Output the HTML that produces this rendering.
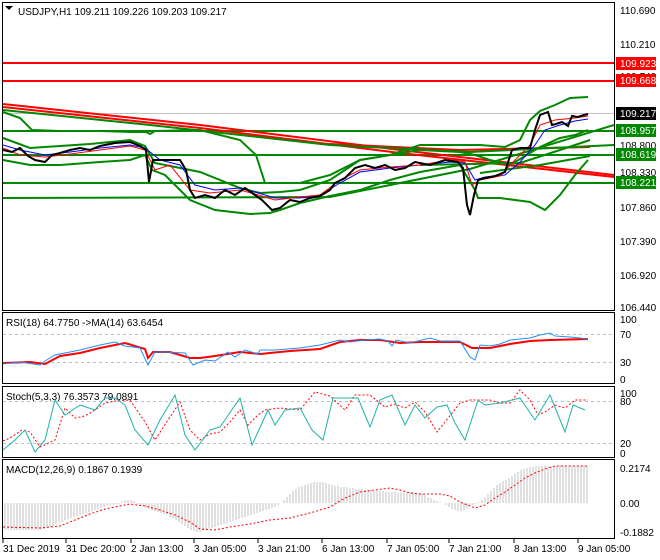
<!DOCTYPE html>
<html><head><meta charset="utf-8"><style>
body{margin:0;background:#fff;}
svg{display:block;font-family:"Liberation Sans",sans-serif;}
text{font-size:10px;fill:#000}
</style></head><body>
<svg width="660" height="560" viewBox="0 0 660 560" xmlns="http://www.w3.org/2000/svg">
<rect width="660" height="560" fill="#fff"/>
<!-- panels -->
<g fill="none" stroke="#000" stroke-width="1">
<rect x="2.5" y="2.5" width="612" height="308"/>
<rect x="2.5" y="312.5" width="612" height="71"/>
<rect x="2.5" y="386.5" width="612" height="71"/>
<rect x="2.5" y="459.5" width="612" height="79"/>
</g>
<!-- main chart -->
<polygon points="5,6 13,6 9,10" fill="#000"/>
<text x="18" y="15">USDJPY,H1  109.211 109.226 109.203 109.217</text>
<line x1="3" y1="113.5" x2="614" y2="113.5" stroke="#c0c0c0"/>
<line x1="3" y1="63" x2="614" y2="63" stroke="#f00" stroke-width="2"/>
<line x1="3" y1="81" x2="614" y2="81" stroke="#f00" stroke-width="2"/>
<line x1="3" y1="131" x2="614" y2="131" stroke="#080" stroke-width="2"/>
<line x1="3" y1="155" x2="614" y2="155" stroke="#080" stroke-width="2"/>
<line x1="3" y1="183" x2="614" y2="183" stroke="#080" stroke-width="2"/>
<polyline points="3,104 200,125 400,150 614,175" fill="none" stroke="#f00" stroke-width="2"/>
<polyline points="3,107 200,128 400,153 614,177" fill="none" stroke="#f00" stroke-width="2"/>
<polyline points="330,144 460,150 590,147" fill="none" stroke="#f00" stroke-width="2"/>
<polyline points="3,110 150,125 330,145 470,152 614,145" fill="none" stroke="#080" stroke-width="2"/>
<g fill="none" stroke="#080" stroke-width="2">
<polyline points="3,112 20,118 32,130 60,131 100,131 130,132 146,132 150,134 155,131 200,130 240,140 256,155 265,183 300,183 330,175 360,160 390,155 420,145 460,145 480,145 505,147 520,140 530,120 540,111 555,105 570,98 588,97"/>
<polyline points="3,138 30,148 60,146 90,144 110,142 130,140 145,146 155,163 200,172 240,188 260,193 280,192 300,190 330,180 360,160 390,155 420,150 460,152 475,155 490,160 510,165 540,147 560,138 575,135 588,130"/>
<polyline points="3,160 30,165 60,165 100,162 130,160 145,155 152,170 165,175 190,200 215,210 250,214 270,213 280,210 300,203 330,196 360,190 390,180 420,172 460,165 475,190 478,198 500,198 530,202 545,210 560,195 575,175 588,160"/>
<polyline points="3,198 330,197 470,169 614,125"/>
<polyline points="420,165 520,163 560,150 590,140"/>
<polyline points="480,173 540,165 590,156"/>
</g>
<polyline points="3,145 20,150 45,155 70,152 100,148 130,145 145,148 160,160 180,165 195,185 215,190 240,188 255,192 275,198 300,198 320,195 340,183 360,172 390,168 420,165 450,162 465,163 475,180 485,177 505,175 520,162 535,145 545,130 560,125 575,121 588,119" fill="none" stroke="#00f" stroke-width="1"/>
<polyline points="3,148 20,155 45,157 70,154 100,150 130,146 145,150 155,170 170,165 190,190 210,193 240,190 255,194 275,200 300,197 320,195 340,180 360,170 390,167 420,165 450,160 465,162 472,185 480,180 500,176 515,160 530,145 540,125 555,120 575,118 588,116" fill="none" stroke="#f00" stroke-width="1"/>
<polyline points="3,150 12,152 20,148 28,156 35,160 45,162 52,155 60,153 70,150 80,148 90,150 100,146 115,143 130,142 140,146 146,150 149,182 153,160 160,160 170,160 180,160 186,170 190,190 195,198 205,195 215,198 225,190 235,195 245,188 255,195 262,200 272,210 280,208 290,200 300,202 310,198 320,196 330,190 335,183 345,178 355,168 365,165 375,168 385,165 395,170 405,168 415,162 430,165 445,160 458,162 463,168 467,205 470,215 474,195 478,180 485,178 495,176 505,172 512,150 520,148 530,148 535,130 540,115 548,112 552,125 556,124 562,122 568,126 572,116 578,117 584,115 588,114" fill="none" stroke="#000" stroke-width="2"/>
<!-- price axis -->
<g>
<text x="620" y="14">110.690</text>
<text x="620" y="48">110.210</text>
<text x="620" y="149">108.800</text>
<text x="620" y="176">108.330</text>
<text x="620" y="211">107.860</text>
<text x="620" y="245">107.390</text>
<text x="620" y="279">106.920</text>
<text x="620" y="311">106.440</text>
<text x="620" y="80">109.740</text>
<rect x="616" y="57" width="40" height="13" fill="#f00"/><text x="620" y="67" style="fill:#fff">109.923</text>
<rect x="616" y="74" width="40" height="13" fill="#f00"/><text x="620" y="84" style="fill:#fff">109.668</text>
<rect x="616" y="107" width="40" height="13" fill="#000"/><text x="620" y="117" style="fill:#fff">109.217</text>
<rect x="616" y="124" width="40" height="13" fill="#080"/><text x="620" y="134" style="fill:#fff">108.957</text>
<rect x="616" y="148" width="40" height="13" fill="#080"/><text x="620" y="158" style="fill:#fff">108.619</text>
<rect x="616" y="176" width="40" height="13" fill="#080"/><text x="620" y="186" style="fill:#fff">108.221</text>
</g>
<!-- RSI -->
<text x="6" y="326">RSI(18) 64.7750  -&gt;MA(14) 63.6454</text>
<line x1="3" y1="334.5" x2="614" y2="334.5" stroke="#c0c0c0" stroke-dasharray="3,3"/>
<line x1="3" y1="362.5" x2="614" y2="362.5" stroke="#c0c0c0" stroke-dasharray="3,3"/>
<polyline points="3,363 30,362 45,364 60,356 80,353 100,348 125,343 145,349 148,358 153,352 170,352 190,358 200,358 215,356 240,352 260,354 290,351 320,349 340,342 360,340 380,340 400,343 420,342 460,342 472,348 490,348 510,344 530,341 550,340 588,339" fill="none" stroke="#f00" stroke-width="2"/>
<polyline points="3,364 20,362 40,365 45,361 55,355 65,353 80,350 100,345 115,342 125,346 140,348 148,365 155,352 165,352 185,353 193,365 205,360 215,361 228,352 235,357 245,350 258,354 260,350 275,350 300,348 320,345 340,340 350,342 365,340 380,339 388,341 392,346 396,340 410,343 430,338 440,341 460,341 470,357 475,360 480,345 490,346 500,344 510,340 520,339 530,338 540,335 550,333 555,336 570,337 580,338 588,339" fill="none" stroke="#1e90ff" stroke-width="1"/>
<text x="620" y="323">100</text><text x="620" y="338">70</text><text x="620" y="366">30</text><text x="620" y="383">0</text>
<!-- Stoch -->
<text x="6" y="400">Stoch(5,3,3) 76.3573 79.0891</text>
<line x1="3" y1="401.5" x2="614" y2="401.5" stroke="#c0c0c0" stroke-dasharray="3,3"/>
<line x1="3" y1="443.5" x2="614" y2="443.5" stroke="#c0c0c0" stroke-dasharray="3,3"/>
<polyline points="3,441 10,438 22,430 30,432 40,447 55,440 65,408 75,418 85,416 95,410 105,403 115,401 130,400 145,422 155,440 168,420 180,402 190,430 200,440 210,434 220,432 230,422 240,410 248,425 258,415 265,410 280,408 300,410 315,392 330,396 345,410 355,395 370,395 385,407 395,404 405,408 415,402 425,412 437,432 445,422 460,403 470,400 480,400 490,400 500,403 510,403 520,390 530,400 538,415 545,412 555,405 565,408 575,400 588,400" fill="none" stroke="#f00" stroke-width="1" stroke-dasharray="2,2"/>
<polyline points="3,450 15,440 25,430 35,452 45,440 55,400 65,415 80,405 95,410 105,398 115,398 125,405 135,430 148,445 160,420 175,395 185,435 195,450 210,430 220,427 225,420 235,405 240,398 252,445 268,410 275,425 285,410 300,408 312,430 323,440 333,398 345,398 358,398 370,427 380,400 392,395 405,425 415,405 425,418 437,407 447,405 455,423 465,440 478,400 485,405 500,403 520,398 535,420 550,395 565,432 573,405 585,410" fill="none" stroke="#20b2aa" stroke-width="1"/>
<text x="620" y="397">100</text><text x="620" y="405">80</text><text x="620" y="447">20</text><text x="620" y="457">0</text>
<!-- MACD -->
<text x="6" y="473">MACD(12,26,9) 0.1867 0.1939</text>
<g stroke="#c0c0c0" stroke-width="1">
<path d="M5,503V530M8,503V530M11,503V530M14,503V530M17,503V530M20,503V530M23,503V530M26,503V530M29,503V530M32,503V530M35,503V530M38,503V530M41,503V530M44,503V529M47,503V528M50,503V527M53,503V526M56,503V524M59,503V523M62,503V522M65,503V520M68,503V519M71,503V518M74,503V517M77,503V516M80,503V515M83,503V514M86,503V513M89,503V512M92,503V511M95,503V510M98,503V509M101,503V508M104,503V507M107,503V506M110,503V505M113,503V505M116,503V504M119,503V504M122,503V501M125,503V500M128,503V500M131,503V500M134,503V501M137,503V504M140,503V505M143,503V506M146,503V508M149,503V509M152,503V510M155,503V511M158,503V512M161,503V513M164,503V514M167,503V515M170,503V517M173,503V518M176,503V520M179,503V522M182,503V524M185,503V526M188,503V528M191,503V530M194,503V531M197,503V532M200,503V532M203,503V531M206,503V530M209,503V529M212,503V528M215,503V527M218,503V526M221,503V525M224,503V524M227,503V523M230,503V522M233,503V521M236,503V520M239,503V519M242,503V518M245,503V517M248,503V516M251,503V515M254,503V514M257,503V513M260,503V512M263,503V511M266,503V510M269,503V509M272,503V508M275,503V507M278,503V505M281,503V503M284,503V500M287,503V497M290,503V494M293,503V491M296,503V489M299,503V487M302,503V486M305,503V485M308,503V484M311,503V483M314,503V482M317,503V482M320,503V482M323,503V482M326,503V483M329,503V484M332,503V485M335,503V486M338,503V486M341,503V487M344,503V487M347,503V487M350,503V488M353,503V488M356,503V489M359,503V489M362,503V489M365,503V490M368,503V490M371,503V490M374,503V491M377,503V491M380,503V491M383,503V491M386,503V492M389,503V492M392,503V492M395,503V492M398,503V493M401,503V493M404,503V493M407,503V493M410,503V492M413,503V492M416,503V493M419,503V493M422,503V494M425,503V495M428,503V497M431,503V498M434,503V500M437,503V501M440,503V502M443,503V503M446,503V505M449,503V507M452,503V509M455,503V510M458,503V511M461,503V511M464,503V510M467,503V508M470,503V506M473,503V505M476,503V504M479,503V502M482,503V500M485,503V497M488,503V494M491,503V491M494,503V488M497,503V485M500,503V483M503,503V481M506,503V480M509,503V478M512,503V476M515,503V474M518,503V472M521,503V470M524,503V469M527,503V468M530,503V467M533,503V467M536,503V466M539,503V466M542,503V466M545,503V466M548,503V466M551,503V466M554,503V466M557,503V466M560,503V466M563,503V466M566,503V466M569,503V466M572,503V466M575,503V466M578,503V466M581,503V466M584,503V466M587,503V466"/>
</g>
<polyline points="3,527 40,528 60,526 75,520 90,514 105,509 120,506 130,504 145,506 160,510 175,515 190,522 200,529 215,530 230,527 250,524 270,520 290,518 310,513 330,507 345,498 360,492 375,490 390,488 400,490 410,493 420,494 440,494 450,496 460,502 475,508 485,505 495,498 505,492 515,485 525,478 535,473 545,469 555,466 570,466 588,466" fill="none" stroke="#f00" stroke-width="1" stroke-dasharray="2,2"/>
<text x="620" y="472">0.2174</text><text x="620" y="507">0.00</text><text x="620" y="536">-0.1882</text>
<!-- time axis -->
<g stroke="#000"><path d="M3,539V543M66,539V543M131,539V543M194,539V543M258,539V543M322,539V543M387,539V543M449,539V543M514,539V543M578,539V543"/></g>
<text x="3" y="552">31 Dec 2019</text>
<text x="66" y="552">31 Dec 20:00</text>
<text x="131" y="552">2 Jan 13:00</text>
<text x="194" y="552">3 Jan 05:00</text>
<text x="258" y="552">3 Jan 21:00</text>
<text x="322" y="552">6 Jan 13:00</text>
<text x="387" y="552">7 Jan 05:00</text>
<text x="449" y="552">7 Jan 21:00</text>
<text x="514" y="552">8 Jan 13:00</text>
<text x="578" y="552">9 Jan 05:00</text>
</svg>
</body></html>
